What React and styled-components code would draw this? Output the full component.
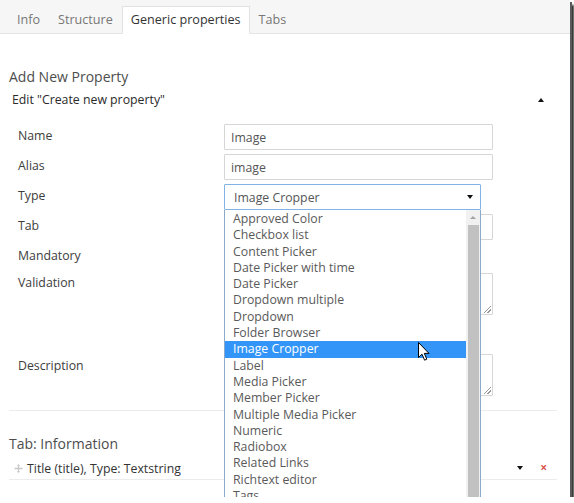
import React from 'react';
import styled, { createGlobalStyle } from 'styled-components';

const GlobalStyle = createGlobalStyle`
  html, body {
    margin: 0;
    padding: 0;
    background: #fff;
  }
  body {
    font-family: "Open Sans", "Noto Sans", sans-serif;
    font-size: 12.3px;
    color: #333;
  }
`;

const TYPES = [
  'Approved Color',
  'Checkbox list',
  'Content Picker',
  'Date Picker with time',
  'Date Picker',
  'Dropdown multiple',
  'Dropdown',
  'Folder Browser',
  'Image Cropper',
  'Label',
  'Media Picker',
  'Member Picker',
  'Multiple Media Picker',
  'Numeric',
  'Radiobox',
  'Related Links',
  'Richtext editor',
  'Tags',
];

const TABS = ['Info', 'Structure', 'Generic properties', 'Tabs'];

export default function App() {
  return (
    <>
      <GlobalStyle />
      <Frame>
        <TabBar>
          {TABS.map(t => (
            <Tab key={t} active={t === 'Generic properties'}>{t}</Tab>
          ))}
        </TabBar>

        <Content>
          <Heading>Add New Property</Heading>
          <EditRow>
            <span>Edit "Create new property"</span>
            <Caret up />
          </EditRow>

          <Form>
            <Row>
              <Label>Name</Label>
              <Input defaultValue="Image" />
            </Row>
            <Row>
              <Label>Alias</Label>
              <Input defaultValue="image" />
            </Row>
            <Row>
              <Label>Type</Label>
              <SelectBox>
                <span>Image Cropper</span>
                <Caret />
              </SelectBox>
            </Row>
            <Row>
              <Label>Tab</Label>
              <Input />
            </Row>
            <Row>
              <Label>Mandatory</Label>
              <Control />
            </Row>
            <Row gap={39}>
              <Label top={1}>Validation</Label>
              <TextArea />
            </Row>
            <Row>
              <Label>Description</Label>
              <TextArea />
            </Row>

            <ListBox>
              <Options>
                {TYPES.map(t => (
                  <Option key={t} selected={t === 'Image Cropper'}>{t}</Option>
                ))}
              </Options>
              <ScrollBar>
                <ScrollArrow />
                <Thumb />
              </ScrollBar>
            </ListBox>

            <Pointer width="12" height="19" viewBox="0 0 12 19">
              <path d="M0.5 0.5 L0.5 15.5 L4 12.2 L6.6 18.2 L8.8 17.2 L6.3 11.4 L11 11.4 Z" fill="#fff" stroke="#000" strokeWidth="1" strokeLinejoin="round" />
            </Pointer>
          </Form>

          <Divider />

          <Heading tab>Tab: Information</Heading>
          <PropertyRow>
            <MoveIcon width="9" height="9" viewBox="0 0 9 9">
              <path d="M4.5 0.5 V8.5 M0.5 4.5 H8.5" stroke="#c8c8c8" strokeWidth="1.3" />
              <path d="M3 2 L4.5 0.3 L6 2 Z M3 7 L4.5 8.7 L6 7 Z" fill="#c8c8c8" />
            </MoveIcon>
            <PropertyText>Title (title), Type: Textstring</PropertyText>
            <Caret />
            <Remove>×</Remove>
          </PropertyRow>
        </Content>
      </Frame>
    </>
  );
}

const Frame = styled.div`
  position: relative;
  width: 570px;
  height: 497px;
  overflow: hidden;
  background: #fff;
  box-shadow: 2px 2px 0 #5a5a5a, 4px 5px 2px #2c2c2c;
`;

const TabBar = styled.div`
  display: flex;
  align-items: flex-end;
  height: 33px;
  padding-left: 8px;
  background: #f6f6f6;
  border-bottom: 1px solid #e4e4e4;
`;

const Tab = styled.div`
  height: 26px;
  line-height: 25px;
  padding: 0 8px;
  margin-bottom: -1px;
  font-size: 12.6px;
  color: ${p => (p.active ? '#333' : '#777')};
  background: ${p => (p.active ? '#fff' : 'transparent')};
  border: 1px solid ${p => (p.active ? '#e1e1e1' : 'transparent')};
  border-bottom-color: ${p => (p.active ? '#fff' : 'transparent')};
`;

const Content = styled.div`
  padding: 0 13px 0 9px;
`;

const Heading = styled.div`
  margin-top: ${p => (p.tab ? '23px' : '33px')};
  font-size: 14px;
  line-height: 20px;
  color: #4d4d4d;
`;

const EditRow = styled.div`
  display: flex;
  align-items: center;
  justify-content: space-between;
  margin-top: 3px;
  padding: 0 13px 0 3px;
  line-height: 20px;
  color: #2b2b2b;
`;

const Caret = styled.i`
  display: inline-block;
  width: 0;
  height: 0;
  border-left: 3px solid transparent;
  border-right: 3px solid transparent;
  ${p => (p.up ? 'border-bottom: 4px solid #111;' : 'border-top: 4px solid #111;')}
`;

const Form = styled.div`
  position: relative;
  margin-top: 14px;
`;

const Row = styled.div`
  display: flex;
  align-items: flex-start;
  margin-bottom: ${p => (p.gap || 4)}px;
`;

const Label = styled.div`
  width: 206px;
  flex: none;
  padding: ${p => (p.top ?? 3)}px 0 0 9px;
  line-height: 18px;
  color: #3d3d3d;
`;

const Input = styled.input`
  box-sizing: border-box;
  width: 269px;
  height: 26px;
  margin: 0;
  padding: 0 6px;
  font: inherit;
  color: #555;
  border: 1px solid #d6d6d6;
  border-radius: 1px;
  background: #fff;
  &:focus { outline: none; }
`;

const Control = styled.div`
  width: 269px;
  height: 25px;
`;

const SelectBox = styled.div`
  box-sizing: border-box;
  display: flex;
  align-items: center;
  justify-content: space-between;
  width: 257px;
  height: 26px;
  padding: 0 7px 0 9px;
  color: #555;
  border: 1px solid #82b3e6;
  border-radius: 1px;
  background: #fff;
`;

const TextArea = styled.div`
  position: relative;
  box-sizing: border-box;
  width: 269px;
  height: 42px;
  border: 1px solid #d6d6d6;
  border-radius: 1px;
  &:after {
    content: '';
    position: absolute;
    right: 1px;
    bottom: 1px;
    width: 7px;
    height: 7px;
    background: linear-gradient(135deg, transparent 45%, #999 45%, #999 55%, transparent 55%, transparent 70%, #999 70%, #999 80%, transparent 80%);
  }
`;

const ListBox = styled.div`
  position: absolute;
  top: 86px;
  left: 215px;
  box-sizing: border-box;
  display: flex;
  width: 257px;
  height: 300px;
  background: #fff;
  border: 1px solid #8ba9c9;
  border-top: none;
`;

const Options = styled.div`
  flex: 1;
  padding-top: 1px;
`;

const Option = styled.div`
  height: 16.3px;
  line-height: 16px;
  padding-left: 8px;
  color: ${p => (p.selected ? '#fff' : '#5a5a5a')};
  background: ${p => (p.selected ? '#3295f7' : 'transparent')};
  white-space: nowrap;
`;

const ScrollBar = styled.div`
  display: flex;
  flex-direction: column;
  align-items: center;
  width: 14px;
  background: #f1f1f1;
`;

const ScrollArrow = styled.div`
  height: 15px;
  width: 100%;
  position: relative;
  &:after {
    content: '';
    position: absolute;
    left: 4px;
    top: 6px;
    border-left: 3px solid transparent;
    border-right: 3px solid transparent;
    border-bottom: 3px solid #a3a3a3;
  }
`;

const Thumb = styled.div`
  width: 11px;
  flex: 1;
  margin-bottom: 2px;
  background: #c1c1c1;
`;

const Pointer = styled.svg`
  position: absolute;
  left: 409px;
  top: 218px;
`;

const Divider = styled.div`
  margin-top: 14px;
  border-top: 1px solid #ececec;
`;

const PropertyRow = styled.div`
  display: flex;
  align-items: center;
  margin-top: 3px;
  padding: 0 10px 0 5px;
  height: 22px;
  border-bottom: 1px solid #ececec;
`;

const MoveIcon = styled.svg`
  flex: none;
  margin-right: 4px;
`;

const PropertyText = styled.span`
  flex: 1;
  color: #333;
`;

const Remove = styled.span`
  margin-left: 17px;
  font-size: 12px;
  font-weight: bold;
  line-height: 1;
  color: #d9534f;
`;
